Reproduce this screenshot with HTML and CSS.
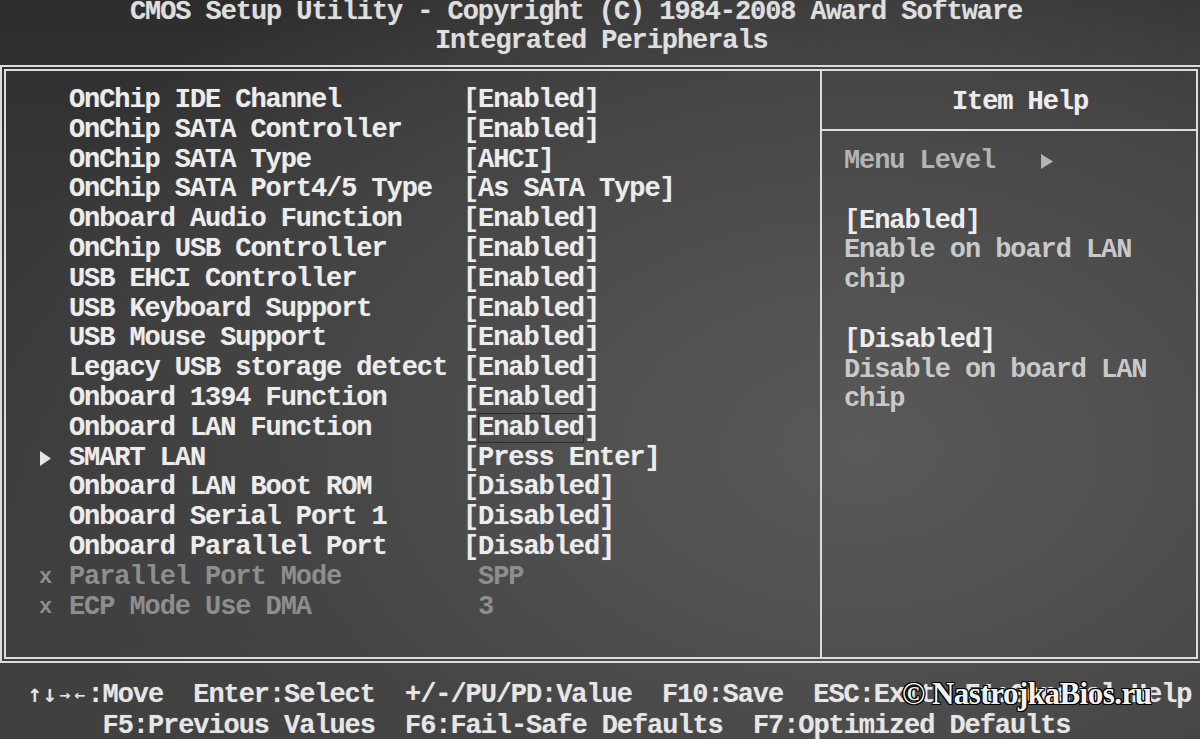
FILE: index.html
```html
<!DOCTYPE html>
<html lang="en">
<head>
<meta charset="utf-8">
<title>CMOS Setup Utility - Integrated Peripherals</title>
<link rel="stylesheet" href="styles.css">
</head>
<body>
<div class="screen">
  <header class="title">
    <div class="t1">CMOS Setup Utility - Copyright (C) 1984-2008 Award Software</div>
    <div class="t2">Integrated Peripherals</div>
  </header>

  <main class="frame">
    <section class="settings">
      <div class="row"><span class="mark"></span><span class="label">OnChip IDE Channel</span><span class="value">[Enabled]</span></div>
      <div class="row"><span class="mark"></span><span class="label">OnChip SATA Controller</span><span class="value">[Enabled]</span></div>
      <div class="row"><span class="mark"></span><span class="label">OnChip SATA Type</span><span class="value">[AHCI]</span></div>
      <div class="row"><span class="mark"></span><span class="label">OnChip SATA Port4/5 Type</span><span class="value">[As SATA Type]</span></div>
      <div class="row"><span class="mark"></span><span class="label">Onboard Audio Function</span><span class="value">[Enabled]</span></div>
      <div class="row"><span class="mark"></span><span class="label">OnChip USB Controller</span><span class="value">[Enabled]</span></div>
      <div class="row"><span class="mark"></span><span class="label">USB EHCI Controller</span><span class="value">[Enabled]</span></div>
      <div class="row"><span class="mark"></span><span class="label">USB Keyboard Support</span><span class="value">[Enabled]</span></div>
      <div class="row"><span class="mark"></span><span class="label">USB Mouse Support</span><span class="value">[Enabled]</span></div>
      <div class="row"><span class="mark"></span><span class="label">Legacy USB storage detect</span><span class="value">[Enabled]</span></div>
      <div class="row"><span class="mark"></span><span class="label">Onboard 1394 Function</span><span class="value">[Enabled]</span></div>
      <div class="row"><span class="mark"></span><span class="label">Onboard LAN Function</span><span class="value">[<span class="cursor">Enabled</span>]</span></div>
      <div class="row"><span class="mark"><svg class="tri" width="11" height="15" viewBox="0 0 11 15"><polygon points="0,0 11,7.5 0,15" fill="#e6e6e6"/></svg></span><span class="label">SMART LAN</span><span class="value">[Press Enter]</span></div>
      <div class="row"><span class="mark"></span><span class="label">Onboard LAN Boot ROM</span><span class="value">[Disabled]</span></div>
      <div class="row"><span class="mark"></span><span class="label">Onboard Serial Port 1</span><span class="value">[Disabled]</span></div>
      <div class="row"><span class="mark"></span><span class="label">Onboard Parallel Port</span><span class="value">[Disabled]</span></div>
      <div class="row dim"><span class="mark">x</span><span class="label">Parallel Port Mode</span><span class="value"> SPP</span></div>
      <div class="row dim"><span class="mark">x</span><span class="label">ECP Mode Use DMA</span><span class="value"> 3</span></div>
    </section>

    <aside class="help">
      <div class="help-head">Item Help</div>
      <div class="help-body">
        <div class="hl menu">Menu Level   <svg class="tri" width="12" height="15" viewBox="0 0 12 15"><polygon points="0,0 12,7.5 0,15" fill="#b4b4b4"/></svg></div>
        <div class="hl blank"></div>
        <div class="hl strong">[Enabled]</div>
        <div class="hl">Enable on board LAN</div>
        <div class="hl">chip</div>
        <div class="hl blank"></div>
        <div class="hl strong">[Disabled]</div>
        <div class="hl">Disable on board LAN</div>
        <div class="hl">chip</div>
      </div>
    </aside>
  </main>

  <footer class="keys">
    <div class="kl"><span class="ar ud">↑</span><span class="ar ud">↓</span><span class="ar lr">→</span><span class="ar lr">←</span>:Move  Enter:Select  +/-/PU/PD:Value  F10:Save  ESC:Exit  F1:General Help</div>
    <div class="kl kl2">     F5:Previous Values  F6:Fail-Safe Defaults  F7:Optimized Defaults</div>
  </footer>

  <div class="watermark">© NastrojkaBios.ru</div>
</div>
</body>
</html>
```

FILE: styles.css
```css
html, body {
  margin: 0;
  padding: 0;
}

body {
  width: 1200px;
  height: 739px;
  overflow: hidden;
  background: #333;
}

.screen {
  position: relative;
  width: 1200px;
  height: 739px;
  overflow: hidden;
  background:
    radial-gradient(ellipse 900px 600px at 860px 450px, #595959 0%, #4f4f4f 35%, #444444 65%, rgba(60,60,60,0) 100%),
    linear-gradient(180deg, #2d2d2d 0%, #383838 30%, #404040 100%);
  font-family: "Liberation Mono", "DejaVu Sans Mono", monospace;
  font-weight: bold;
  font-size: 27px;
  letter-spacing: -1.08px;
  color: #ececec;
  text-shadow: 0 0 1px rgba(255,255,255,0.35);
}

/* title */
.title {
  height: 65px;
  box-sizing: border-box;
  color: #dedede;
}
.t1 {
  white-space: pre;
  line-height: 24px;
  padding-left: 130px;
}
.t2 {
  white-space: pre;
  line-height: 35px;
  padding-left: 435px;
}

/* main frame */
.frame {
  display: flex;
  width: 1202px;
  height: 598px;
  box-sizing: border-box;
  border: 6px double #dcdcdc;
}

.settings {
  width: 814px;
  flex: none;
  box-sizing: border-box;
  padding: 15px 0 0 33px;
}

.row {
  display: grid;
  grid-template-columns: 30px 394px auto;
  height: 29.8px;
  line-height: 29.8px;
  white-space: pre;
}

.mark {
  display: flex;
  align-items: center;
  font-size: 22px;
}
.mark .tri {
  margin-left: 1px;
}

.cursor {
  box-shadow: inset 0 0 0 1px rgba(20,20,20,0.55);
}

.row.dim {
  color: #8e8e8e;
  text-shadow: none;
}

/* help */
.help {
  flex: 1;
  border-left: 2px solid #dcdcdc;
  display: flex;
  flex-direction: column;
}
.help-head {
  height: 60px;
  line-height: 62px;
  border-bottom: 2px solid #dcdcdc;
  padding-left: 130px;
  white-space: pre;
  box-sizing: border-box;
}
.help-body {
  padding: 16px 0 0 22px;
}
.hl {
  height: 29.8px;
  line-height: 29.8px;
  white-space: pre;
  color: #c9c9c9;
  text-shadow: none;
}
.hl.strong {
  color: #ededed;
}
.hl.menu {
  color: #b4b4b4;
  display: flex;
  align-items: center;
}

/* footer */
.keys {
  padding: 17px 0 0 27px;
  color: #e6e6e6;
}
.kl {
  white-space: pre;
  line-height: 31px;
  height: 31px;
}
.kl.kl2 {
  box-sizing: border-box;
  height: 28px;
  padding-top: 3px;
  line-height: 25px;
}
.ar {
  display: inline-block;
  width: 15.12px;
  text-align: center;
  font-family: "DejaVu Sans", sans-serif;
  letter-spacing: 0;
  vertical-align: top;
  overflow: hidden;
}
.ar.ud {
  font-size: 18px;
}
.ar.lr {
  font-size: 13px;
}

/* watermark overlay */
.watermark {
  position: absolute;
  left: 902px;
  top: 676px;
  font-family: "Liberation Serif", "DejaVu Serif", serif;
  font-weight: bold;
  font-size: 31px;
  letter-spacing: -0.5px;
  color: #f2f2f2;
  text-shadow:
    -1px -1px 0 #000, 1px -1px 0 #000, -1px 1px 0 #000, 1px 1px 0 #000,
    0 -1px 0 #000, 0 1px 0 #000, -1px 0 0 #000, 1px 0 0 #000;
}
```
